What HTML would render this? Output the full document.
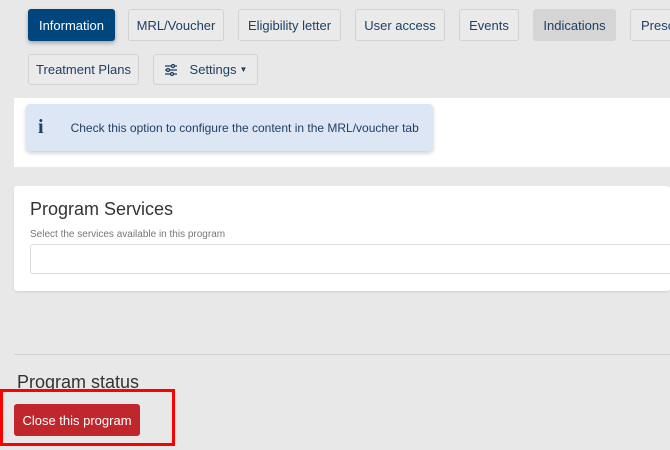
<!DOCTYPE html><html><head><style>
body{margin:0;width:670px;height:450px;overflow:hidden;background:#e8e8e8;font-family:"Liberation Sans",sans-serif;position:relative}
.b{position:absolute;box-sizing:border-box;border:1.5px solid #d2d2d2;border-radius:3px;background:#eaeaea;color:#1f3f66;font-size:13px;display:flex;align-items:center;justify-content:center;white-space:nowrap}
.r1{top:9px;height:32px}.r2{top:54px;height:31px}
</style></head><body>
<div class="b r1" style="left:28px;width:87px;background:#00457c;color:#fff;border-color:#00457c;box-shadow:0 2px 4px rgba(0,0,0,.3)">Information</div>
<div class="b r1" style="left:128px;width:96px">MRL/Voucher</div>
<div class="b r1" style="left:238px;width:103px">Eligibility letter</div>
<div class="b r1" style="left:355px;width:90px">User access</div>
<div class="b r1" style="left:459px;width:60px">Events</div>
<div class="b r1" style="left:533px;width:83px;background:#d5d5d5;border-color:#d5d5d5">Indications</div>
<div class="b r1" style="left:630px;width:60px;justify-content:flex-start;padding-left:10px">Prescr</div>
<div class="b r2" style="left:28px;width:111px">Treatment Plans</div>
<div class="b r2" style="left:153px;width:105px"><svg width="14" height="12" viewBox="0 0 14 12" style="margin-right:12px" stroke="#1f3f66" stroke-width="1.3" fill="none"><path d="M1 2h12M1 6h12M1 10h12"/><circle cx="9" cy="2" r="1.5" fill="#eaeaea"/><circle cx="4" cy="6" r="1.5" fill="#eaeaea"/><circle cx="8" cy="10" r="1.5" fill="#eaeaea"/></svg>Settings <span style="font-size:8px;margin-left:3px">▼</span></div>
<div style="position:absolute;left:14px;top:98px;width:656px;height:69px;background:#fff"></div>
<div style="position:absolute;left:26px;top:104px;width:407px;height:47px;background:#dce6f4;border-radius:4px;box-shadow:0 2px 4px rgba(0,0,0,.2);color:#1f3f66;font-size:12px;display:flex;align-items:center"><span style="font-family:'Liberation Serif',serif;font-weight:bold;font-size:20px;margin:0 27px 0 12px">i</span>Check this option to configure the content in the MRL/voucher tab</div>
<div style="position:absolute;left:14px;top:186px;width:656px;height:105px;background:#fff;border-radius:3px;box-shadow:0 1px 2px rgba(0,0,0,.1)">
<div style="position:absolute;left:16px;top:13px;font-size:18px;color:#333">Program Services</div>
<div style="position:absolute;left:16px;top:43px;font-size:10px;color:#777">Select the services available in this program</div>
<div style="position:absolute;left:16px;top:58px;width:650px;height:30px;box-sizing:border-box;border:1px solid #ddd;border-radius:3px"></div>
</div>
<div style="position:absolute;left:14px;top:354px;width:656px;height:1px;background:#cfcfcf"></div>
<div style="position:absolute;left:17px;top:372px;font-size:18px;color:#333">Program status</div>
<div style="position:absolute;left:0;top:389px;width:175px;height:57px;box-sizing:border-box;border:3px solid #f00"></div>
<div style="position:absolute;left:14px;top:404px;width:126px;height:32px;background:#c0272d;border-radius:3px;color:#fff;font-size:13px;display:flex;align-items:center;justify-content:center">Close this program</div>
</body></html>
